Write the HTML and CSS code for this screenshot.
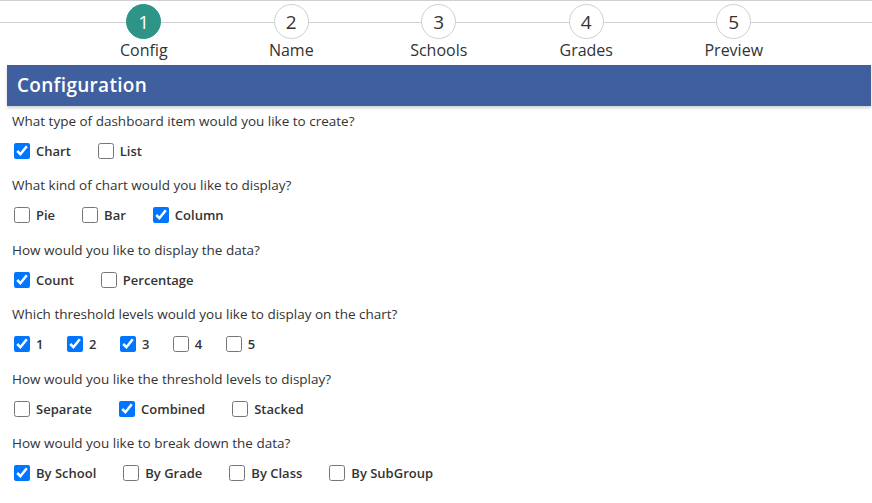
FILE: index.html
```html
<!DOCTYPE html>
<html lang="en">
<head>
<meta charset="utf-8">
<title>Dashboard item wizard</title>
<link rel="stylesheet" href="styles.css">
</head>
<body>
<div class="wizard">
  <div class="steps">
    <div class="step active"><span class="num">1</span><span class="label">Config</span></div>
    <div class="step"><span class="num">2</span><span class="label">Name</span></div>
    <div class="step"><span class="num">3</span><span class="label">Schools</span></div>
    <div class="step"><span class="num">4</span><span class="label">Grades</span></div>
    <div class="step"><span class="num">5</span><span class="label">Preview</span></div>
  </div>
  <div class="panel">
    <h2 class="panel-title">Configuration</h2>
    <div class="panel-body">
      <div class="question">
        <p class="q">What type of dashboard item would you like to create?</p>
        <div class="opts">
          <label class="opt"><input type="checkbox" checked><span>Chart</span></label>
          <label class="opt"><input type="checkbox"><span>List</span></label>
        </div>
      </div>
      <div class="question">
        <p class="q">What kind of chart would you like to display?</p>
        <div class="opts">
          <label class="opt"><input type="checkbox"><span>Pie</span></label>
          <label class="opt"><input type="checkbox"><span>Bar</span></label>
          <label class="opt"><input type="checkbox" checked><span>Column</span></label>
        </div>
      </div>
      <div class="question">
        <p class="q">How would you like to display the data?</p>
        <div class="opts">
          <label class="opt"><input type="checkbox" checked><span>Count</span></label>
          <label class="opt"><input type="checkbox"><span>Percentage</span></label>
        </div>
      </div>
      <div class="question">
        <p class="q">Which threshold levels would you like to display on the chart?</p>
        <div class="opts">
          <label class="opt num-opt"><input type="checkbox" checked><span>1</span></label>
          <label class="opt num-opt"><input type="checkbox" checked><span>2</span></label>
          <label class="opt num-opt"><input type="checkbox" checked><span>3</span></label>
          <label class="opt num-opt"><input type="checkbox"><span>4</span></label>
          <label class="opt num-opt"><input type="checkbox"><span>5</span></label>
        </div>
      </div>
      <div class="question">
        <p class="q">How would you like the threshold levels to display?</p>
        <div class="opts">
          <label class="opt"><input type="checkbox"><span>Separate</span></label>
          <label class="opt"><input type="checkbox" checked><span>Combined</span></label>
          <label class="opt"><input type="checkbox"><span>Stacked</span></label>
        </div>
      </div>
      <div class="question">
        <p class="q">How would you like to break down the data?</p>
        <div class="opts">
          <label class="opt"><input type="checkbox" checked><span>By School</span></label>
          <label class="opt"><input type="checkbox"><span>By Grade</span></label>
          <label class="opt"><input type="checkbox"><span>By Class</span></label>
          <label class="opt"><input type="checkbox"><span>By SubGroup</span></label>
        </div>
      </div>
    </div>
  </div>
</div>
</body>
</html>
```
FILE: styles.css
```css
html, body {
  margin: 0;
  padding: 0;
  background: #fff;
}
body {
  font-family: "Open Sans", Lato, sans-serif;
  color: #333;
}
.wizard {
  border-top: 1px solid #d0d0d0;
}
.steps {
  position: relative;
  display: flex;
  padding-left: 70px;
  height: 63px;
}
.steps::before {
  content: "";
  position: absolute;
  left: 0;
  right: 0;
  top: 21px;
  border-top: 1px solid #cfcfcf;
}
.step {
  position: relative;
  width: 147.5px;
  display: flex;
  flex-direction: column;
  align-items: center;
}
.num {
  box-sizing: border-box;
  width: 35px;
  height: 35px;
  margin-top: 3px;
  border-radius: 50%;
  border: 1px solid #cfcfcf;
  background: #fff;
  display: flex;
  align-items: center;
  justify-content: center;
  font-size: 19px;
  color: #333;
}
.step.active .num {
  background: #2e9488;
  border-color: #2e9488;
  color: #fff;
}
.label {
  font-size: 16px;
  line-height: 20px;
  margin-top: 1px;
  color: #333;
}
.panel {
  margin: 1px 1px 0 7px;
}
.panel-title {
  margin: 0;
  height: 41px;
  line-height: 41px;
  padding-left: 10px;
  background: #405f9f;
  color: #fff;
  font-size: 19px;
  font-weight: 600;
  letter-spacing: 0.3px;
  box-shadow: 0 2px 3px rgba(0, 0, 0, 0.18);
}
.panel-body {
  padding: 6px 0 0 5px;
}
.question {
  height: 64.4px;
}
.q {
  margin: 0;
  font-size: 13.5px;
  line-height: 18px;
  color: #333;
}
.opts {
  display: flex;
  margin-top: 12px;
}
.opt {
  display: flex;
  align-items: center;
  margin-right: 25px;
  font-size: 13px;
  font-weight: 600;
  color: #333;
}
.opt.num-opt {
  margin-right: 23px;
  letter-spacing: -1.5px;
}
.opt input {
  width: 16px;
  height: 16px;
  margin: 0 6px 0 2px;
}
```
